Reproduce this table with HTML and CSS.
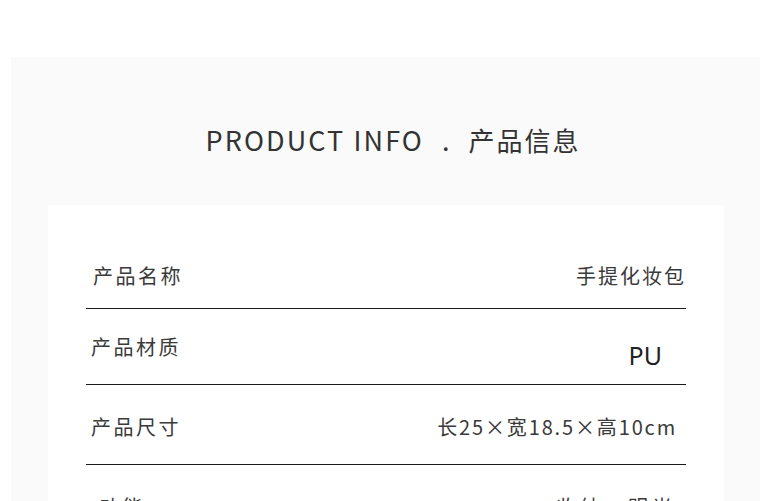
FILE: index.html
```html
<!DOCTYPE html>
<html lang="zh-CN">
<head>
<meta charset="utf-8">
<title>产品信息</title>
<link rel="stylesheet" href="styles.css">
</head>
<body>
<section class="panel">
  <h1 class="title"><span class="en">PRODUCT INFO</span><span class="dot">.</span><span class="cn">产品信息</span></h1>
  <div class="card">
    <div class="row row-1">
      <span class="label">产品名称</span>
      <span class="value">手提化妆包</span>
    </div>
    <div class="row row-2">
      <span class="label">产品材质</span>
      <span class="value value-pu">PU</span>
    </div>
    <div class="row row-3">
      <span class="label">产品尺寸</span>
      <span class="value value-size">长25×宽18.5×高10cm</span>
    </div>
    <div class="row row-4">
      <span class="label">功能</span>
      <span class="value value-func">收纳、明光</span>
    </div>
  </div>
</section>
</body>
</html>
```

FILE: styles.css
```css
html, body {
  margin: 0;
  padding: 0;
  background: #ffffff;
  height: 501px;
  overflow: hidden;
}

body {
  font-family: "Noto Sans CJK SC", "Noto Sans", sans-serif;
  color: #333333;
}

.panel {
  margin: 57px 20px 0 11px;
  width: 749px;
  background: #fafafa;
  padding: 65px 0 0;
  box-sizing: border-box;
  height: 444px;
  overflow: hidden;
}

.title {
  margin: 0;
  font-weight: 400;
  font-size: 27px;
  line-height: 36px;
  text-align: center;
  color: #333;
  display: flex;
  justify-content: center;
  align-items: baseline;
  padding-left: 15px;
}

.title .en {
  letter-spacing: 2.1px;
}

.title .dot {
  margin: 0 19px 0 18px;
}

.title .cn {
  font-size: 26px;
  letter-spacing: 2px;
}

.card {
  margin: 47px 36px 0 37px;
  background: #ffffff;
  padding: 23px 38px 0;
}

.row {
  display: flex;
  justify-content: space-between;
  align-items: center;
  border-bottom: 1px solid #1a1a1a;
  padding: 31px 0 24px;
  line-height: 22px;
  font-size: 20px;
  color: #3a3a3a;
}

.row-1 {
  padding-top: 37px;
  padding-bottom: 21px;
}

.label {
  letter-spacing: 2.5px;
  padding-left: 5px;
}

.row-1 .label {
  padding-left: 7px;
}

.value {
  letter-spacing: 2px;
}

.row-2 {
  padding-bottom: 22px;
}

.row-2 .label {
  position: relative;
  top: -4px;
}

.value-pu {
  font-family: "Noto Sans", sans-serif;
  font-size: 25px;
  letter-spacing: 0;
  padding-right: 24px;
  position: relative;
  top: 4px;
  color: #222;
}

.row-3 {
  padding-top: 31px;
  padding-bottom: 26px;
}

.value-size {
  letter-spacing: 1.85px;
  padding-right: 9px;
}

.row-4 {
  border-bottom: none;
}

.row-4 .label {
  padding-left: 14px;
}

.value-func {
  padding-right: 10px;
  letter-spacing: 4px;
}
```
